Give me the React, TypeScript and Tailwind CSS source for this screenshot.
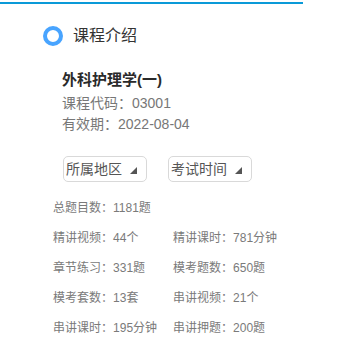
const font = { fontFamily: '"Liberation Sans", "Noto Sans CJK SC", sans-serif' };

type Stat = [string, string];

const rows: Stat[][] = [
  [["总题目数", "1181题"]],
  [["精讲视频", "44个"], ["精讲课时", "781分钟"]],
  [["章节练习", "331题"], ["模考题数", "650题"]],
  [["模考套数", "13套"], ["串讲视频", "21个"]],
  [["串讲课时", "195分钟"], ["串讲押题", "200题"]],
];

function Select({ label }: { label: string }) {
  return (
    <button
      type="button"
      className="flex h-[26px] w-[84px] items-center rounded-[5px] border border-[#d9d9d9] bg-white pl-[2px] text-[14px] leading-[24px] text-[#555]"
    >
      <span>{label}</span>
      <svg width="7" height="7" viewBox="0 0 7 7" className="ml-[8px] mt-[2px]">
        <polygon points="7,0 7,7 0,7" fill="#555" />
      </svg>
    </button>
  );
}

export default function App() {
  return (
    <div className="h-[355px] w-[358px] bg-white" style={font}>
      <div className="mt-[2px] h-[2px] w-[303px] bg-[#0a9ad8]" />

      <div className="mt-[22px] flex h-[20px] items-center pl-[43px]">
        <span className="h-[20px] w-[20px] rounded-full border-[4px] border-[#48a4ff]" />
        <span className="ml-[10px] text-[16px] leading-[20px] text-[#333]">课程介绍</span>
      </div>

      <div className="mt-[23px] pl-[62px]">
        <p className="text-[15px] font-bold leading-[22px] text-[#2a2a2a]">外科护理学(一)</p>
        <div className="mt-[2px] text-[14px] leading-[21px] text-[#777]">
          <p>课程代码：03001</p>
          <p>有效期：2022-08-04</p>
        </div>

        <div className="ml-[1px] mt-[21px] flex gap-[21px]">
          <Select label="所属地区" />
          <Select label="考试时间" />
        </div>
      </div>

      <div className="mt-[11px] pl-[53px] text-[12px] leading-[30px] text-[#7a7a7a]">
        {rows.map((row, i) => (
          <div key={i} className="flex">
            {row.map(([k, v]) => (
              <span key={k} className="w-[120px]">
                {k}：{v}
              </span>
            ))}
          </div>
        ))}
      </div>
    </div>
  );
}
